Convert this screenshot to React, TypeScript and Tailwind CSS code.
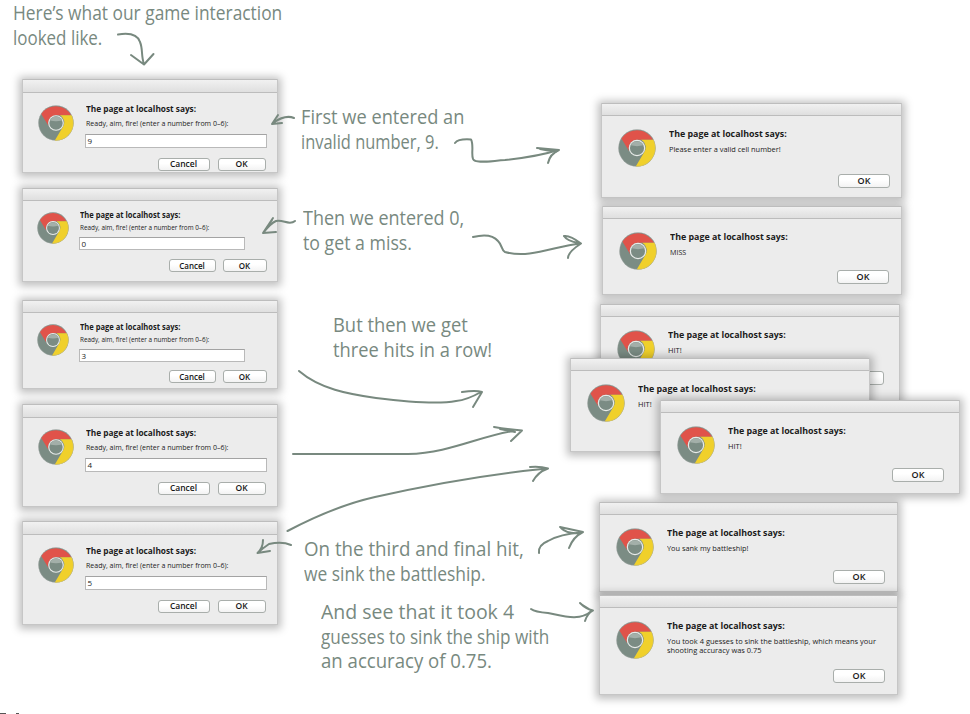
import { useLayoutEffect, useRef, useState } from "react";
import clsx from "clsx";

/* One line of text squeezed or stretched horizontally to fill its box. */
function FitLine({ children, className }: { children: string; className: string }) {
  const box = useRef<HTMLDivElement>(null);
  const text = useRef<HTMLSpanElement>(null);
  const [scale, setScale] = useState(1);
  useLayoutEffect(() => {
    if (box.current && text.current) {
      setScale(box.current.clientWidth / text.current.offsetWidth);
    }
  }, [children]);
  return (
    <div ref={box} className={clsx("whitespace-nowrap", className)}>
      <span ref={text} className="inline-block origin-left" style={{ transform: `scaleX(${scale})` }}>
        {children}
      </span>
    </div>
  );
}

function ChromeLogo({ className }: { className: string }) {
  return (
    <svg viewBox="0 0 36 36" className={clsx("shrink-0", className)}>
      <circle cx="18" cy="18" r="17.6" fill="#7b8c84" />
      <path d="M3.2 9 A17.6 17.6 0 0 1 33.2 10.3 L18 10.3 A8 8 0 0 0 10.6 21Z" fill="#e0534a" />
      <path d="M33.7 10.3 A17.6 17.6 0 0 1 16.8 35.6 L24.8 22 A8 8 0 0 0 22 10.3Z" fill="#f0d02b" />
      <circle cx="18" cy="18" r="7.8" fill="#e8ebe9" />
      <circle cx="18" cy="18" r="6.7" fill="#7b8c84" />
      <path d="M12 15.5 A6.5 6.5 0 0 1 24 15.5 Q18 17 12 15.5Z" fill="#a3afa9" />
      <circle cx="18" cy="18" r="17.4" fill="none" stroke="#b5b5b5" strokeOpacity=".5" strokeWidth=".6" />
    </svg>
  );
}

function Button({ label, className }: { label: string; className: string }) {
  return (
    <button
      className={clsx(
        "flex items-center justify-center rounded-[3px] border border-[#a9aeab] bg-linear-to-b from-white from-40% to-[#f3f3f3] font-semibold text-[#161616]",
        className,
      )}
    >
      {label}
    </button>
  );
}

const frame =
  "flex flex-col border-x border-b border-[#c6c6c6] bg-[#ececec] shadow-[0_1px_8px_3px_rgba(0,0,0,0.25)] font-['Open_Sans','Noto_Sans',sans-serif] text-[#1b1b1b]";
const bar = "shrink-0 border-t border-b border-t-[#bdbdbd] border-b-[#bcbcbc] bg-linear-to-b from-[#f1f1f1] to-[#dfdfdf]";

type PromptProps = { value: string; className: string; bodyPad: string; buttonPad: string; small?: boolean };

function Prompt({ value, className, bodyPad, buttonPad, small }: PromptProps) {
  return (
    <section className={clsx(frame, "w-[256px] shrink-0", className)}>
      <div className={clsx(bar, small ? "h-[13px]" : "h-[14px]")} />
      <div className={clsx("flex", small ? "pl-[14px]" : "pl-[15px]", bodyPad)}>
        <ChromeLogo className={small ? "mt-[3px] size-[32px]" : "mt-[2px] size-[36px]"} />
        <div className={small ? "ml-[11px]" : "ml-[12px]"}>
          <FitLine
            className={
              small
                ? "h-[12px] w-[100px] text-[8px] leading-[12px] font-bold"
                : "h-[13px] w-[110px] text-[8.5px] leading-[12px] font-bold"
            }
          >
            The page at localhost says:
          </FitLine>
          <FitLine
            className={
              small
                ? "h-[12px] w-[129px] text-[7.5px] leading-[13px]"
                : "h-[15px] w-[142px] text-[8px] leading-[13px]"
            }
          >
            Ready, aim, fire! (enter a number from 0–6):
          </FitLine>
          <div
            className={clsx(
              "-ml-px flex items-center border border-[#b9b9b9] border-t-[#a3a3a3] bg-white pl-[2px] text-[8px] leading-none",
              small ? "mt-[4px] h-[13px] w-[166px]" : "mt-[3px] h-[14px] w-[182px]",
            )}
          >
            {value}
          </div>
        </div>
      </div>
      <div className={clsx("flex justify-end", small ? "gap-[7px] pr-[10px]" : "gap-[8px] pr-[11px]", buttonPad)}>
        <Button label="Cancel" className={small ? "h-[13px] w-[47px] text-[8px]" : "h-[13px] w-[52px] text-[8.5px]"} />
        <Button label="OK" className={small ? "h-[13px] w-[44px] text-[8px]" : "h-[13px] w-[48px] text-[8.5px]"} />
      </div>
    </section>
  );
}

type AlertProps = { lines: { text: string; width: string }[]; className: string; footPad?: string };

function Alert({ lines, className, footPad }: AlertProps) {
  return (
    <section className={clsx(frame, "absolute", className)}>
      <div className={clsx(bar, "h-[13px]")} />
      <div className="flex pt-[13px] pl-[16px]">
        <ChromeLogo className="size-[38px]" />
        <div className="-mt-[2px] ml-[13px]">
          <FitLine className="h-[14px] w-[118px] text-[9px] leading-[13px] font-bold">
            The page at localhost says:
          </FitLine>
          {lines.map((line, i) => (
            <FitLine
              key={line.text}
              className={clsx("text-[8px]", line.width, i === 0 ? "h-[12px] leading-[15px]" : "h-[10px] leading-[9px]")}
            >
              {line.text}
            </FitLine>
          ))}
        </div>
      </div>
      {footPad && (
        <div className={clsx("mt-auto flex justify-end", footPad)}>
          <Button label="OK" className="h-[14px] w-[52px] text-[9px]" />
        </div>
      )}
    </section>
  );
}

function Note({ lines, className }: { lines: { text: string; width: string }[]; className: string }) {
  return (
    <div
      className={clsx(
        "font-['Open_Sans','Noto_Sans',sans-serif] text-[20px] font-medium text-[#78897f]",
        className,
      )}
    >
      {lines.map((line) => (
        <FitLine key={line.text} className={clsx("h-[24.5px] leading-[25px]", line.width)}>
          {line.text}
        </FitLine>
      ))}
    </div>
  );
}

const arrows = [
  "M118 34.5 C127 33 137 33 140 42 C143 49 141 56 144 64 M131 55 L144 64.5 L153.5 54",
  "M294 118 C287 115 280 118 273 123 M278 115 L272 124 L282 123",
  "M455 143 C458 139 464 139 471 139.5 C474 145 471 154 473 159 C475 164 490 161 505 160 C524 158 540 156 558 150 M537 148 L559 150 Q550 154 548 163 M540 149 L556 152",
  "M295 221 C289 226 283 219 276 221 C271 223 267 228 263 233 M273 218 L263 233 L276 232 M272 220 L265 230",
  "M473 237 C485 234 493 235 498 241 C503 246 501 250 505 252 C530 259 555 246 580 243.5 M564 236 Q570 235 581 243.5 Q568 252 568 258 M564 236 Q567 241 579 243",
  "M299 371 C320 389 348 394 376 398 C408 402 440 404 456 401 Q467 400 481 392 M462 392 Q476 390 482 392 L473 407",
  "M293 454 L408 454 C449 453 477 437 513 431 M494 427 Q505 429 522 430.5 L511 441 M500 429 L515 432",
  "M287.5 531 Q335 506 375 497 C428 485 490 474 547 468.5 M530 467 Q540 466 548 468.5 Q538 472 533 481",
  "M291 545 Q282 541 269 544 Q263 548 257.5 553 M263 540 Q263 548 257.5 553 L270 551",
  "M539 553 Q538 545 548 541 Q560 534 582 532.5 M560 527 L583 532 Q573 537 569 548 M561 528 Q567 534 579 533",
  "M531 609 Q535 612 548 613 C563 616 580 622 592 610.5 M580 603 Q586 609 593 610.5 Q587 614 585 621 M581 604 L589 609",
];

export default function App() {
  return (
    <main className="relative flex h-[714px] w-[970px] overflow-hidden bg-white">
      <div className="flex w-[300px] shrink-0 flex-col">
        <Note
          className="ml-[13px] h-[79px] shrink-0"
          lines={[
            { text: "Here’s what our game interaction", width: "w-[269px]" },
            { text: "looked like.", width: "w-[89px]" },
          ]}
        />
        <div className="flex flex-col pl-[21.5px]">
          <Prompt value="9" className="h-[94px]" bodyPad="pt-[10px]" buttonPad="pt-[10px]" />
          <Prompt value="0" small className="mt-[15px] h-[94px]" bodyPad="pt-[8px]" buttonPad="pt-[9px]" />
          <Prompt value="3" small className="mt-[18px] h-[89px]" bodyPad="pt-[8px]" buttonPad="pt-[8px]" />
          <Prompt value="4" className="mt-[15px] h-[103px]" bodyPad="pt-[9px]" buttonPad="pt-[10px]" />
          <Prompt value="5" className="mt-[14px] h-[104px]" bodyPad="pt-[10px]" buttonPad="pt-[10px]" />
        </div>
      </div>

      <div className="flex w-[270px] shrink-0 flex-col pt-[104px]">
        <Note
          className="ml-[1px]"
          lines={[
            { text: "First we entered an", width: "w-[163px]" },
            { text: "invalid number, 9.", width: "w-[138px]" },
          ]}
        />
        <Note
          className="mt-[52px] ml-[3px]"
          lines={[
            { text: "Then we entered 0,", width: "w-[161px]" },
            { text: "to get a miss.", width: "w-[109px]" },
          ]}
        />
        <Note
          className="mt-[58px] ml-[33px]"
          lines={[
            { text: "But then we get", width: "w-[135px]" },
            { text: "three hits in a row!", width: "w-[159px]" },
          ]}
        />
        <Note
          className="mt-[175px] ml-[4px]"
          lines={[
            { text: "On the third and final hit,", width: "w-[220px]" },
            { text: "we sink the battleship.", width: "w-[182px]" },
          ]}
        />
        <Note
          className="mt-[14px] ml-[21px]"
          lines={[
            { text: "And see that it took 4", width: "w-[193px]" },
            { text: "guesses to sink the ship with", width: "w-[228px]" },
            { text: "an accuracy of 0.75.", width: "w-[171px]" },
          ]}
        />
      </div>

      {/* Freely stacked alert windows */}
      <div className="relative isolate w-[400px] shrink-0">
        <Alert
          className="top-[103px] left-[31px] h-[95px] w-[301px]"
          footPad="pr-[11px] pb-[9px]"
          lines={[{ text: "Please enter a valid cell number!", width: "w-[112px]" }]}
        />
        <Alert
          className="top-[206px] left-[32px] h-[89px] w-[300px]"
          footPad="pr-[12px] pb-[10px]"
          lines={[{ text: "MISS", width: "w-[16px]" }]}
        />
        <Alert
          className="top-[304px] left-[30px] h-[97px] w-[300px]"
          footPad="pr-[15px] pb-[15px]"
          lines={[{ text: "HIT!", width: "w-[14px]" }]}
        />
        <Alert
          className="top-[358px] left-0 h-[94px] w-[300px]"
          lines={[{ text: "HIT!", width: "w-[14px]" }]}
        />
        <Alert
          className="top-[502px] left-[29px] h-[90px] w-[299px]"
          footPad="pr-[12px] pb-[7px]"
          lines={[{ text: "You sank my battleship!", width: "w-[82px]" }]}
        />
        <Alert
          className="top-[595px] left-[29px] h-[100px] w-[299px]"
          footPad="pr-[12px] pb-[11px]"
          lines={[
            { text: "You took 4 guesses to sink the battleship, which means your", width: "w-[209px]" },
            { text: "shooting accuracy was 0.75", width: "w-[95px]" },
          ]}
        />
        <Alert
          className="top-[400px] left-[90px] h-[94px] w-[300px]"
          footPad="pr-[15px] pb-[11px]"
          lines={[{ text: "HIT!", width: "w-[14px]" }]}
        />
      </div>

      {/* Hand-drawn arrows over the windows */}
      <svg
        viewBox="0 0 970 714"
        className="pointer-events-none absolute inset-0 h-[714px] w-[970px]"
        fill="none"
        stroke="#78897f"
        strokeWidth="2"
        strokeLinecap="round"
        strokeLinejoin="round"
      >
        {arrows.map((d) => (
          <path key={d} d={d} />
        ))}
      </svg>

      {/* Tops of the page footer cut off by the lower edge */}
      <div className="absolute bottom-0 left-0 flex h-px gap-[10px]">
        <span className="w-[6px] bg-[#555]" />
        <span className="w-[3px] bg-[#555]" />
      </div>
    </main>
  );
}
